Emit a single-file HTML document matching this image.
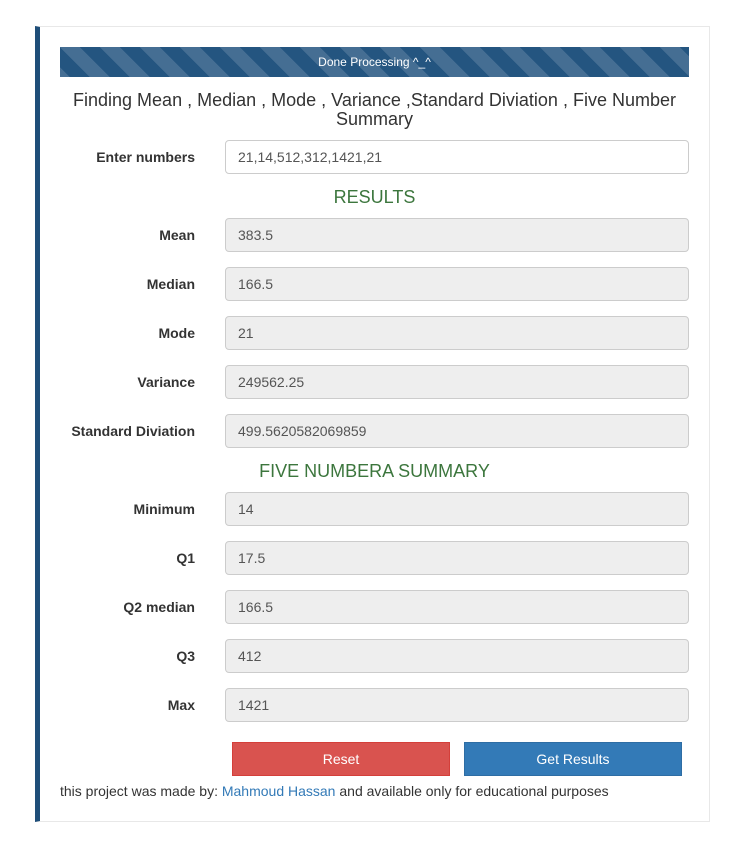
<!DOCTYPE html>
<html><head><style>
body{margin:0;width:736px;height:856px;background:#fff;font-family:"Liberation Sans",Arial,sans-serif;font-size:14px;color:#333;position:relative;overflow:hidden}
.panel{position:absolute;left:35px;top:26px;width:669px;height:794px;border:1px solid #e8e8e8;border-left:5px solid #1f4e79}
.bar{position:absolute;left:60px;top:47px;width:629px;height:30px;background-color:#245580;background-image:linear-gradient(45deg,rgba(255,255,255,.15) 25%,transparent 25%,transparent 50%,rgba(255,255,255,.15) 50%,rgba(255,255,255,.15) 75%,transparent 75%,transparent);background-size:40px 40px;color:#fff;font-size:12px;text-align:center;line-height:30px}
.title{position:absolute;left:60px;width:629px;top:91px;text-align:center;font-size:18px;line-height:19px;color:#333}
.lbl{position:absolute;left:40px;width:155px;text-align:right;font-weight:bold;font-size:14px}
.in{position:absolute;left:225px;width:464px;box-sizing:border-box;height:34px;border:1px solid #ccc;border-radius:4px;background:#eee;padding-left:12px;line-height:32px;color:#555;font-size:14px}
.h{position:absolute;left:60px;width:629px;text-align:center;color:#3c763d;font-size:18px}
.btn{position:absolute;top:742px;height:32px;color:#fff;text-align:center;line-height:32px;font-size:14px}
</style></head><body>
<div class="panel"></div>
<div class="bar">Done Processing ^_^</div>
<div class="title">Finding Mean , Median , Mode , Variance ,Standard Diviation , Five Number Summary</div>
<div class="lbl" style="top:149px">Enter numbers</div><div class="in" style="top:140px;background:#fff">21,14,512,312,1421,21</div>
<div class="h" style="top:187px">RESULTS</div>
<div class="lbl" style="top:227px">Mean</div><div class="in" style="top:218px">383.5</div>
<div class="lbl" style="top:276px">Median</div><div class="in" style="top:267px">166.5</div>
<div class="lbl" style="top:325px">Mode</div><div class="in" style="top:316px">21</div>
<div class="lbl" style="top:374px">Variance</div><div class="in" style="top:365px">249562.25</div>
<div class="lbl" style="top:423px">Standard Diviation</div><div class="in" style="top:414px">499.5620582069859</div>
<div class="h" style="top:461px">FIVE NUMBERA SUMMARY</div>
<div class="lbl" style="top:501px">Minimum</div><div class="in" style="top:492px">14</div>
<div class="lbl" style="top:550px">Q1</div><div class="in" style="top:541px">17.5</div>
<div class="lbl" style="top:599px">Q2 median</div><div class="in" style="top:590px">166.5</div>
<div class="lbl" style="top:648px">Q3</div><div class="in" style="top:639px">412</div>
<div class="lbl" style="top:697px">Max</div><div class="in" style="top:688px">1421</div>
<div class="btn" style="left:232px;width:216px;background:#d9534f;border:1px solid #d43f3a">Reset</div>
<div class="btn" style="left:464px;width:216px;background:#337ab7;border:1px solid #2e6da4">Get Results</div>
<div style="position:absolute;left:60px;top:783px">this project was made by: <span style="color:#337ab7">Mahmoud Hassan</span> and available only for educational purposes</div>
</body></html>
